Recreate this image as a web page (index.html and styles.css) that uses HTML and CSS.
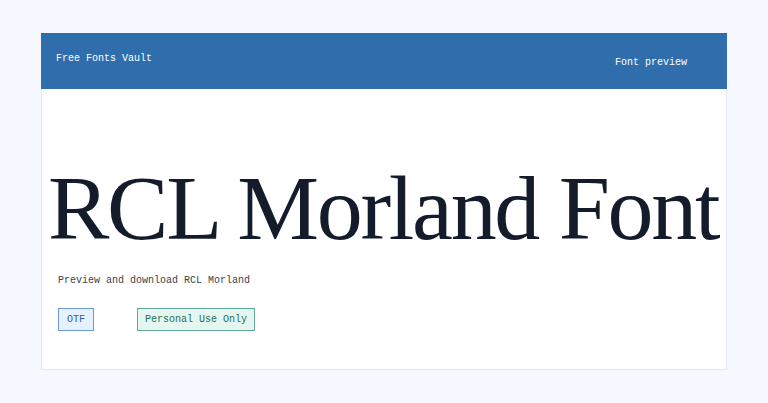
FILE: index.html
```html
<!DOCTYPE html>
<html lang="en">
<head>
    <meta charset="UTF-8">
    <meta name="viewport" content="width=device-width, initial-scale=1.0">
    <title>RCL Morland Font</title>
    <link rel="stylesheet" href="styles.css">
</head>
<body>
    <div class="page">
        <header class="site-header">
            <a href="#" class="brand">Free Fonts Vault</a>
            <nav class="site-nav">
                <a href="#" class="nav-link">Font preview</a>
            </nav>
        </header>

        <main class="preview">
            <h1 class="preview-title">RCL Morland Font</h1>
            <p class="preview-desc">Preview and download RCL Morland</p>
            <div class="tags">
                <span class="tag tag-format">OTF</span>
                <span class="tag tag-license">Personal Use Only</span>
            </div>
        </main>
    </div>
</body>
</html>
```

FILE: styles.css
```css
/* Page shell */
body {
    margin: 0;
    background-color: #f5f9ff;
    font-family: "Liberation Mono", "DejaVu Sans Mono", monospace;
}

.page {
    width: 686px;
    height: 337px;
    margin: 33px 0 0 41px;
    background-color: #fff;
    border: 1px solid #e3e8f0;
    border-top: none;
    box-sizing: border-box;
    display: flex;
    flex-direction: column;
}

/* Blue header bar */
.site-header {
    height: 56px;
    background-color: #2f6dad;
    display: flex;
    justify-content: space-between;
    align-items: center;
    padding: 0 40px 0 15px;
    margin: 0 -1px;
}

.site-header a {
    color: #fff;
    text-decoration: none;
    font-size: 10px;
}

.brand {
    margin-top: -6px;
}

.nav-link {
    margin-top: -8px;
}

/* Preview body */
.preview {
    padding: 0 16px;
}

.preview-title {
    font-family: "Liberation Serif", "Times New Roman", serif;
    font-weight: normal;
    font-size: 92px;
    line-height: 1;
    letter-spacing: -2.3px;
    color: #141c2b;
    margin: 73px 0 0 -10px;
    white-space: nowrap;
}

.preview-desc {
    font-size: 10px;
    color: #3a4252;
    margin: 21px 0 0 0;
}

.tags {
    display: flex;
    gap: 43px;
    margin-top: 22px;
}

.tag {
    font-size: 10px;
    padding: 5px 8px;
    border: 1px solid;
}

.tag-format {
    background-color: #e6f0ff;
    border-color: #6c9cd6;
    color: #2f5f9e;
}

.tag-license {
    background-color: #e5f6f0;
    border-color: #5fa99a;
    color: #1b6e5c;
    padding: 5px 7px;
}
```
